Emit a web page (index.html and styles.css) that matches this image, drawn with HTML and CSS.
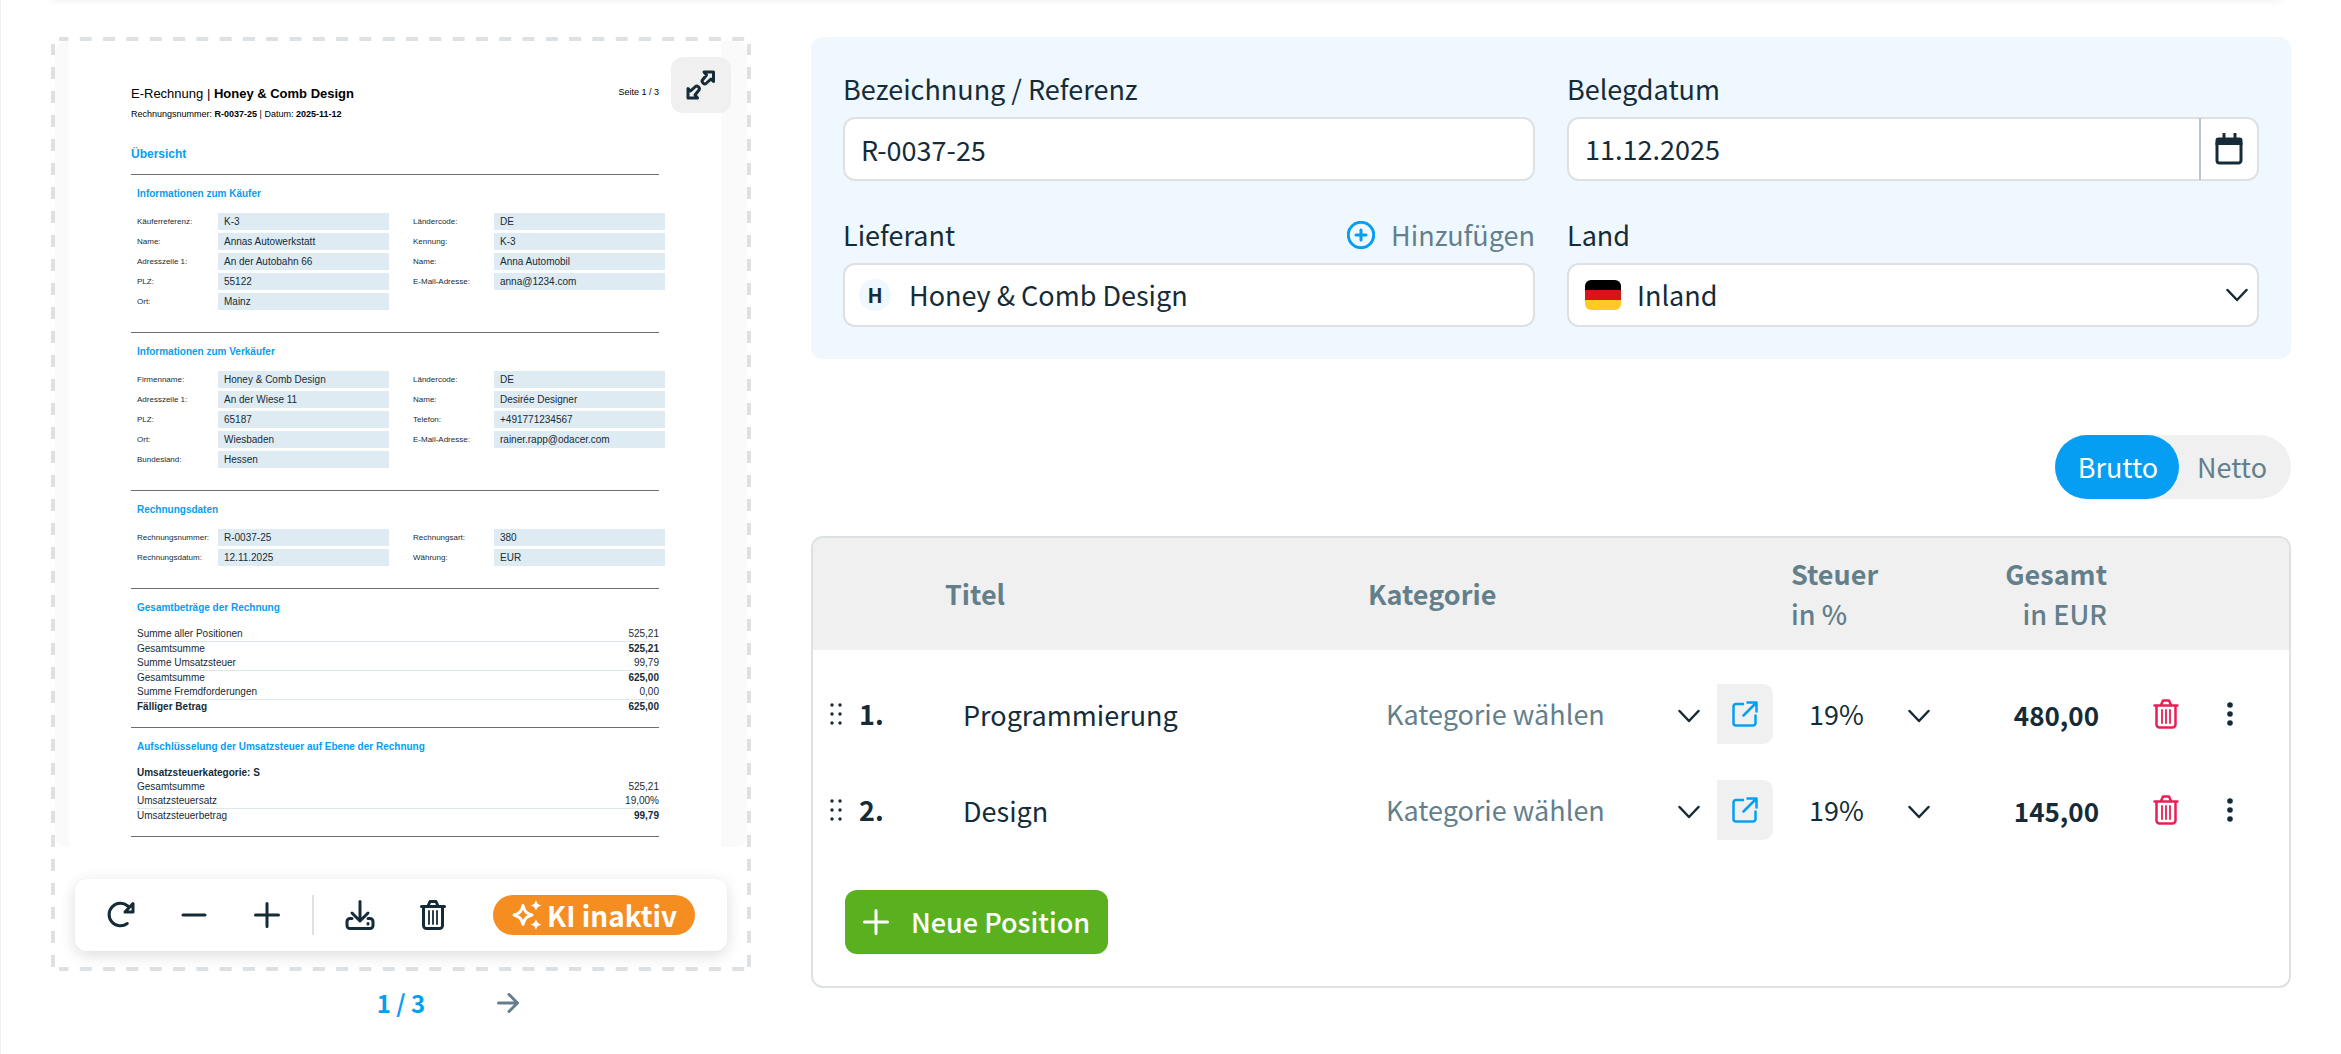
FILE: index.html
```html
<!DOCTYPE html>
<html lang="de">
<head>
  <meta charset="UTF-8">
  <meta name="viewport" content="width=device-width, initial-scale=1.0">
  <title>Beleg erfassen</title>
  <link rel="stylesheet" href="styles.css">
</head>
<body>

  <!-- Icons -->
  <svg class="sprite" aria-hidden="true">
    <symbol id="icon-trash" viewBox="0 0 26 30">
      <path d="M1.500 6.500h23M8 6l2-4.500h6L18 6M3.500 6.500v19a3 3 0 0 0 3 3h13a3 3 0 0 0 3-3v-19"/>
      <path stroke-width="1.800" d="M9 11v13M13 11v13M17 11v13"/>
    </symbol>
    <symbol id="icon-chevron" viewBox="0 0 22 14">
      <path d="M1.500 2 11 12l9.500-10"/>
    </symbol>
    <symbol id="icon-plus" viewBox="0 0 26 26">
      <path d="M13 1.500v23M1.500 13h23"/>
    </symbol>
    <symbol id="icon-external" viewBox="0 0 26 26">
      <path d="M11 3H4a2.500 2.500 0 0 0-2.500 2.500V22A2.500 2.500 0 0 0 4 24.500h17a2.500 2.500 0 0 0 2.500-2.500v-7.500M15.500 1.500h9v9M24 2 11.500 14.500"/>
    </symbol>
    <symbol id="icon-grip" viewBox="0 0 14 24">
      <circle cx="3" cy="3" r="1.700"/><circle cx="11" cy="3" r="1.700"/>
      <circle cx="3" cy="12" r="1.700"/><circle cx="11" cy="12" r="1.700"/>
      <circle cx="3" cy="21" r="1.700"/><circle cx="11" cy="21" r="1.700"/>
    </symbol>
    <symbol id="icon-dots" viewBox="0 0 8 24">
      <circle cx="4" cy="3" r="2.800"/><circle cx="4" cy="12" r="2.800"/><circle cx="4" cy="21" r="2.800"/>
    </symbol>
  </svg>

  <main class="page">

    <!-- Vorschau -->
    <section class="preview">
      <div class="viewer">
        <svg class="viewer-border" aria-hidden="true">
          <line x1="8" y1="2" x2="100%" y2="2" stroke-dasharray="12 11.3" stroke-dashoffset="2.500"/>
          <line x1="8" y1="100%" x2="100%" y2="100%" stroke-dasharray="12 11.3" stroke-dashoffset="2.500" class="edge-bottom"/>
          <line x1="2" y1="7" x2="2" y2="100%" stroke-dasharray="12 12" stroke-dashoffset="1"/>
          <line x1="100%" y1="7" x2="100%" y2="100%" stroke-dasharray="12 12" stroke-dashoffset="1" class="edge-right"/>
        </svg>

        <div class="canvas">
          <article class="paper">
            <header class="paper-head">
              <div>
                <p class="paper-title">E-Rechnung | <b>Honey &amp; Comb Design</b></p>
                <p class="paper-sub">Rechnungsnummer: <b>R-0037-25</b> | Datum: <b>2025-11-12</b></p>
              </div>
              <p class="paper-page">Seite 1 / 3</p>
            </header>
            <h1>Übersicht</h1>

            <section class="block">
              <h2>Informationen zum Käufer</h2>
              <div class="fields">
                <dl>
                  <dt>Käuferreferenz:</dt><dd>K-3</dd>
                  <dt>Name:</dt><dd>Annas Autowerkstatt</dd>
                  <dt>Adresszeile 1:</dt><dd>An der Autobahn 66</dd>
                  <dt>PLZ:</dt><dd>55122</dd>
                  <dt>Ort:</dt><dd>Mainz</dd>
                </dl>
                <dl>
                  <dt>Ländercode:</dt><dd>DE</dd>
                  <dt>Kennung:</dt><dd>K-3</dd>
                  <dt>Name:</dt><dd>Anna Automobil</dd>
                  <dt>E-Mail-Adresse:</dt><dd>anna@1234.com</dd>
                </dl>
              </div>
            </section>

            <section class="block">
              <h2>Informationen zum Verkäufer</h2>
              <div class="fields">
                <dl>
                  <dt>Firmenname:</dt><dd>Honey &amp; Comb Design</dd>
                  <dt>Adresszeile 1:</dt><dd>An der Wiese 11</dd>
                  <dt>PLZ:</dt><dd>65187</dd>
                  <dt>Ort:</dt><dd>Wiesbaden</dd>
                  <dt>Bundesland:</dt><dd>Hessen</dd>
                </dl>
                <dl>
                  <dt>Ländercode:</dt><dd>DE</dd>
                  <dt>Name:</dt><dd>Desirée Designer</dd>
                  <dt>Telefon:</dt><dd>+491771234567</dd>
                  <dt>E-Mail-Adresse:</dt><dd>rainer.rapp@odacer.com</dd>
                </dl>
              </div>
            </section>

            <section class="block">
              <h2>Rechnungsdaten</h2>
              <div class="fields">
                <dl>
                  <dt>Rechnungsnummer:</dt><dd>R-0037-25</dd>
                  <dt>Rechnungsdatum:</dt><dd>12.11.2025</dd>
                </dl>
                <dl>
                  <dt>Rechnungsart:</dt><dd>380</dd>
                  <dt>Währung:</dt><dd>EUR</dd>
                </dl>
              </div>
            </section>

            <section class="block block-sums">
              <h2>Gesamtbeträge der Rechnung</h2>
              <table class="sums">
                <tr class="ruled"><td>Summe aller Positionen</td><td>525,21</td></tr>
                <tr><td>Gesamtsumme</td><td><b>525,21</b></td></tr>
                <tr class="ruled"><td>Summe Umsatzsteuer</td><td>99,79</td></tr>
                <tr><td>Gesamtsumme</td><td><b>625,00</b></td></tr>
                <tr class="ruled"><td>Summe Fremdforderungen</td><td>0,00</td></tr>
                <tr><td><b>Fälliger Betrag</b></td><td><b>625,00</b></td></tr>
              </table>
            </section>

            <section class="block block-sums block-last">
              <h2>Aufschlüsselung der Umsatzsteuer auf Ebene der Rechnung</h2>
              <table class="sums">
                <tr><td><b>Umsatzsteuerkategorie: S</b></td><td></td></tr>
                <tr><td>Gesamtsumme</td><td>525,21</td></tr>
                <tr class="ruled"><td>Umsatzsteuersatz</td><td>19,00%</td></tr>
                <tr><td>Umsatzsteuerbetrag</td><td><b>99,79</b></td></tr>
              </table>
            </section>
          </article>
        </div>

        <button class="expand-btn" type="button" aria-label="Vergrößern">
          <svg width="30" height="30" viewBox="0 0 30 30">
            <path d="M18 2h9.500v9.500L25 9l-5 4.500c-1.500 1.500-5-1.500-3.500-3.500L20.500 5zM11.500 28H2v-9.500L4.500 21l5-4.500c1.500-1.500 5 1.500 3.500 3.500L9 25z"/>
          </svg>
        </button>

        <div class="toolbar">
          <button type="button" class="tool" aria-label="Drehen">
            <svg width="28" height="28" viewBox="0 0 28 28">
              <path d="M20.300 22.500A11.300 11.300 0 1 1 20.800 5M26 2.500V11h-8z"/>
            </svg>
          </button>
          <button type="button" class="tool" aria-label="Verkleinern">
            <svg width="26" height="26" viewBox="0 0 26 26"><path d="M2 13h22"/></svg>
          </button>
          <button type="button" class="tool" aria-label="Vergrößern">
            <svg width="26" height="26"><use href="#icon-plus"/></svg>
          </button>
          <span class="divider"></span>
          <button type="button" class="tool" aria-label="Herunterladen">
            <svg width="30" height="30" viewBox="0 0 30 30">
              <path d="M15 1.500v19M7 13l8 8 8-8M7 18.500H5a3 3 0 0 0-3 3v4a3 3 0 0 0 3 3h20a3 3 0 0 0 3-3v-4a3 3 0 0 0-3-3h-2M23 23.500v.500"/>
            </svg>
          </button>
          <button type="button" class="tool" aria-label="Löschen">
            <svg width="26" height="30"><use href="#icon-trash"/></svg>
          </button>
          <button type="button" class="ki-btn">
            <svg width="32" height="32" viewBox="0 0 32 32">
              <path d="M12 6.500c1.500 6 3.500 8 9 9.500-5.500 1.500-7.500 3.500-9 9.500-1.500-6-3.500-8-9-9.500 5.500-1.500 7.500-3.500 9-9.500z"/>
              <path class="solid" d="M25 1c1 3.500 2 4.500 5.500 5.500C27 7.500 26 8.500 25 12c-1-3.500-2-4.500-5.500-5.500C23 5.500 24 4.500 25 1zM25 20c1 3.500 2 4.500 5.500 5.500C27 26.500 26 27.500 25 31c-1-3.500-2-4.500-5.500-5.500C23 24.500 24 23.500 25 20z"/>
            </svg>
            KI inaktiv
          </button>
        </div>
      </div>

      <nav class="pager">
        <span class="pager-count">1 / 3</span>
        <button type="button" class="pager-next" aria-label="Nächste Seite">
          <svg width="22" height="20" viewBox="0 0 22 20"><path d="M1.500 10h19M12 1.500l8.500 8.500-8.500 8.500"/></svg>
        </button>
      </nav>
    </section>

    <!-- Beleg -->
    <form class="beleg">
      <div class="details">
        <div class="field">
          <div class="label-row"><label for="referenz">Bezeichnung / Referenz</label></div>
          <input class="control" type="text" id="referenz" value="R-0037-25">
        </div>

        <div class="field">
          <div class="label-row"><label for="datum">Belegdatum</label></div>
          <div class="control date">
            <input type="text" id="datum" value="11.12.2025">
            <button type="button" aria-label="Kalender öffnen">
              <svg width="28" height="32" viewBox="0 0 28 32">
                <path class="solid" d="M3.500 4.500h21a3 3 0 0 1 3 3V12H.500V7.500a3 3 0 0 1 3-3z"/>
                <path d="M9 1v6M20 1v6M2 10v17.500A2.500 2.500 0 0 0 4.500 30h19a2.500 2.500 0 0 0 2.500-2.500V10"/>
              </svg>
            </button>
          </div>
        </div>

        <div class="field">
          <div class="label-row">
            <label for="lieferant">Lieferant</label>
            <button type="button" class="add-btn">
              <svg width="28" height="28" viewBox="0 0 28 28">
                <circle cx="14" cy="14" r="12.700"/><path d="M14 9v10M9 14h10"/>
              </svg>
              Hinzufügen
            </button>
          </div>
          <div class="control supplier">
            <span class="avatar">H</span>
            <input type="text" id="lieferant" value="Honey &amp; Comb Design">
          </div>
        </div>

        <div class="field">
          <div class="label-row"><label for="land">Land</label></div>
          <div class="control country">
            <svg class="flag" width="36" height="30" viewBox="0 0 36 30" aria-hidden="true">
              <path fill="#000" d="M0 0h36v10H0z"/><path fill="#da1319" d="M0 10h36v10H0z"/><path fill="#ffca28" d="M0 20h36v10H0z"/>
            </svg>
            <select id="land"><option>Inland</option></select>
            <svg class="chevron" width="22" height="14"><use href="#icon-chevron"/></svg>
          </div>
        </div>
      </div>

      <div class="mode">
        <button type="button" class="mode-btn active">Brutto</button>
        <button type="button" class="mode-btn">Netto</button>
      </div>

      <div class="positions">
        <table class="pos-table">
          <colgroup>
            <col class="col-nr"><col><col><col class="col-tax"><col class="col-sum"><col class="col-actions">
          </colgroup>
          <thead>
            <tr>
              <th></th>
              <th>Titel</th>
              <th>Kategorie</th>
              <th>Steuer<br><small>in %</small></th>
              <th class="right">Gesamt<br><small>in EUR</small></th>
              <th></th>
            </tr>
          </thead>
          <tbody>
            <tr>
              <td>
                <div class="nr"><svg class="dots" width="14" height="24"><use href="#icon-grip"/></svg>1.</div>
              </td>
              <td><input class="cell-input" type="text" value="Programmierung" aria-label="Titel"></td>
              <td>
                <div class="category">
                  <div class="pick">
                    <select class="empty" aria-label="Kategorie"><option>Kategorie wählen</option></select>
                    <svg class="chevron" width="22" height="14"><use href="#icon-chevron"/></svg>
                  </div>
                  <button type="button" class="open-btn" aria-label="Kategorien öffnen"><svg width="26" height="26"><use href="#icon-external"/></svg></button>
                </div>
              </td>
              <td>
                <div class="pick">
                  <select aria-label="Steuer"><option>19%</option></select>
                  <svg class="chevron" width="22" height="14"><use href="#icon-chevron"/></svg>
                </div>
              </td>
              <td><input class="cell-input amount" type="text" value="480,00" aria-label="Gesamt"></td>
              <td>
                <div class="actions">
                  <button type="button" class="delete" aria-label="Löschen"><svg width="26" height="30"><use href="#icon-trash"/></svg></button>
                  <button type="button" aria-label="Mehr"><svg class="dots" width="8" height="24"><use href="#icon-dots"/></svg></button>
                </div>
              </td>
            </tr>
            <tr>
              <td>
                <div class="nr"><svg class="dots" width="14" height="24"><use href="#icon-grip"/></svg>2.</div>
              </td>
              <td><input class="cell-input" type="text" value="Design" aria-label="Titel"></td>
              <td>
                <div class="category">
                  <div class="pick">
                    <select class="empty" aria-label="Kategorie"><option>Kategorie wählen</option></select>
                    <svg class="chevron" width="22" height="14"><use href="#icon-chevron"/></svg>
                  </div>
                  <button type="button" class="open-btn" aria-label="Kategorien öffnen"><svg width="26" height="26"><use href="#icon-external"/></svg></button>
                </div>
              </td>
              <td>
                <div class="pick">
                  <select aria-label="Steuer"><option>19%</option></select>
                  <svg class="chevron" width="22" height="14"><use href="#icon-chevron"/></svg>
                </div>
              </td>
              <td><input class="cell-input amount" type="text" value="145,00" aria-label="Gesamt"></td>
              <td>
                <div class="actions">
                  <button type="button" class="delete" aria-label="Löschen"><svg width="26" height="30"><use href="#icon-trash"/></svg></button>
                  <button type="button" aria-label="Mehr"><svg class="dots" width="8" height="24"><use href="#icon-dots"/></svg></button>
                </div>
              </td>
            </tr>
          </tbody>
        </table>
        <button type="button" class="new-btn">
          <svg width="26" height="26"><use href="#icon-plus"/></svg>
          Neue Position
        </button>
      </div>
    </form>

  </main>

</body>
</html>
```
FILE: styles.css
```css
* {
  box-sizing: border-box;
}

body {
  margin: 0;
  min-height: 100vh;
  background-color: #fff;
  border-left: 1px solid #f0f0f0;
  color: #152c38;
  font-family: "Noto Sans CJK SC", "Noto Sans", sans-serif;
  font-size: 27px;
  line-height: 40px;
}

button, input, select {
  margin: 0;
  padding: 0;
  border: none;
  background: none;
  color: inherit;
  font: inherit;
}

button {
  display: flex;
  align-items: center;
  justify-content: center;
  cursor: pointer;
}

input, select {
  min-width: 0;
  width: 100%;
  outline: none;
}

select {
  appearance: none;
}

svg {
  flex: none;
  fill: none;
  stroke: currentColor;
  stroke-width: 3;
  stroke-linecap: round;
  stroke-linejoin: round;
}

.sprite {
  display: none;
}

.page {
  display: grid;
  grid-template-columns: 35fr 74fr;
  gap: 60px;
  align-items: start;
  padding: 37px 50px 20px;
}

.page::before {
  content: "";
  position: absolute;
  top: -10px;
  left: 50px;
  right: 60px;
  height: 10px;
  box-shadow: 0 0 8px rgba(0, 0, 0, 0.08);
}

/* Vorschau */
.viewer {
  position: relative;
  padding: 4px 4px 20px;
}

.viewer-border {
  position: absolute;
  top: 0;
  left: 0;
  width: 100%;
  height: 100%;
  stroke: #dde1e4;
  stroke-width: 4;
  stroke-linecap: butt;
}

.edge-bottom {
  transform: translateY(-2px);
}

.edge-right {
  transform: translateX(-2px);
}

.canvas {
  padding: 0 26px 0 14px;
  background-color: #fafafa;
  border-radius: 12px;
}

.paper {
  padding: 43px 62px 10px;
  background-color: #fff;
  color: #152c38;
  font-family: "Liberation Sans", Arial, sans-serif;
  font-size: 10px;
  line-height: 14px;
}

.paper p,
.paper h1,
.paper h2,
.paper dl,
.paper dd {
  margin: 0;
}

.paper-head {
  display: flex;
  justify-content: space-between;
  color: #000;
}

.paper-title {
  font-size: 13px;
  line-height: 20px;
}

.paper-sub {
  font-size: 9px;
  line-height: 20px;
}

.paper-page {
  font-size: 9px;
  line-height: 17px;
}

.paper h1 {
  padding: 20px 0 10px;
  color: #069ef2;
  font-size: 12px;
  line-height: 20px;
}

.block {
  padding: 10px 0 22px 6px;
  border-top: 1px solid #6e6e6e;
}

.block-sums {
  padding-bottom: 13px;
}

.block-last {
  border-bottom: 1px solid #6e6e6e;
}

.block h2 {
  padding-bottom: 10px;
  color: #069ef2;
  font-size: 10px;
  line-height: 18px;
}

.fields {
  display: grid;
  grid-template-columns: 1fr 1fr;
  gap: 24px;
  align-items: start;
  margin-right: -6px;
}

.fields dl {
  display: grid;
  grid-template-columns: 81px 1fr;
  row-gap: 3px;
}

.fields dt {
  font-size: 8px;
  line-height: 17px;
}

.fields dd {
  padding-left: 6px;
  background-color: #dfebf3;
  line-height: 17px;
}

.sums {
  width: 100%;
  border-collapse: collapse;
}

.sums td {
  height: 14px;
  padding: 0;
}

.sums td:last-child {
  text-align: right;
}

.sums .ruled {
  border-bottom: 1px solid #dfe8e8;
}

.expand-btn {
  position: absolute;
  top: 20px;
  right: 20px;
  width: 60px;
  height: 56px;
  background-color: #f0f0f0;
  border-radius: 12px;
}

.toolbar {
  display: flex;
  align-items: center;
  height: 72px;
  margin: 32px 20px 0;
  padding-left: 9px;
  background-color: #fff;
  border-radius: 12px;
  box-shadow: 0 4px 16px rgba(0, 0, 0, 0.14);
  position: relative;
}

.tool {
  width: 73px;
  height: 60px;
}

.divider {
  width: 2px;
  height: 40px;
  margin: 0 9px;
  background-color: #dde1e4;
}

.ki-btn {
  height: 40px;
  margin-left: 24px;
  padding: 0 18px;
  gap: 4px;
  background-color: #f58d20;
  border-radius: 20px;
  color: #fff;
  font-size: 28px;
  font-weight: bold;
  white-space: nowrap;
}

.ki-btn .solid {
  fill: currentColor;
  stroke: none;
}

.pager {
  display: grid;
  grid-template-columns: 1fr auto 1fr;
  align-items: center;
  gap: 72px;
  margin-top: 12px;
}

.pager-count {
  grid-column: 2;
  color: #069ef2;
  font-size: 24px;
  font-weight: bold;
}

.pager-next {
  justify-self: start;
  color: #637f8b;
}

/* Belegdaten */
.details {
  display: grid;
  grid-template-columns: 1fr 1fr;
  gap: 34px 32px;
  padding: 32px;
  background-color: #eff7ff;
  border-radius: 12px;
}

.label-row {
  display: flex;
  align-items: center;
  justify-content: space-between;
  height: 40px;
  margin-bottom: 8px;
}

.add-btn {
  gap: 16px;
  color: #637f8b;
}

.add-btn svg {
  color: #069ef2;
}

.control {
  display: flex;
  align-items: center;
  height: 64px;
  padding: 0 16px;
  background-color: #fff;
  border: 2px solid #dde1e4;
  border-radius: 12px;
}

.date {
  padding-right: 0;
}

.date button {
  flex: none;
  width: 58px;
  height: 62px;
  border-left: 2px solid #b9c5ca;
}

.date .solid {
  fill: currentColor;
  stroke: none;
}

.supplier {
  gap: 18px;
  padding-left: 14px;
}

.avatar {
  flex: none;
  width: 32px;
  height: 32px;
  background-color: #eff7ff;
  border-radius: 50%;
  font-size: 20px;
  font-weight: bold;
  line-height: 32px;
  text-align: center;
}

.country {
  gap: 16px;
  padding-right: 9px;
}

.flag {
  border-radius: 6px;
  stroke: none;
}

/* Brutto / Netto */
.mode {
  display: flex;
  width: fit-content;
  height: 64px;
  margin: 76px 0 37px auto;
  background-color: #f0f0f0;
  border-radius: 32px;
  color: #637f8b;
}

.mode-btn {
  padding: 0 24px 0 18px;
}

.mode-btn.active {
  padding: 0 21px 0 23px;
  background-color: #069ef2;
  border-radius: 32px;
  color: #fff;
}

/* Positionen */
.positions {
  overflow: hidden;
  padding-bottom: 32px;
  border: 2px solid #dde1e4;
  border-radius: 12px;
}

.pos-table {
  width: 100%;
  border-collapse: collapse;
  table-layout: fixed;
}

.col-nr {
  width: 132px;
}

.col-tax {
  width: 139px;
}

.col-sum {
  width: 177px;
}

.col-actions {
  width: 182px;
}

.pos-table th {
  height: 112px;
  padding: 0;
  background-color: #f0f0f0;
  color: #637f8b;
  text-align: left;
}

.pos-table th.right {
  text-align: right;
}

.pos-table small {
  font-size: 27px;
  font-weight: 500;
}

.pos-table td {
  height: 96px;
  padding: 0;
}

.pos-table tbody tr:first-child td {
  height: 112px;
  padding-top: 16px;
}

.chevron,
.open-btn svg,
.delete svg {
  stroke-width: 2.5;
}

.dots {
  fill: currentColor;
  stroke: none;
}

.nr {
  display: flex;
  align-items: center;
  gap: 16px;
  padding-left: 16px;
  font-weight: bold;
}

.cell-input {
  height: 60px;
  padding: 0 18px;
}

.cell-input.amount {
  padding-right: 8px;
  font-size: 26px;
  font-weight: bold;
  text-align: right;
}

.category {
  display: flex;
  gap: 17px;
  padding-right: 18px;
}

.pick {
  position: relative;
  flex: 1;
}

.pick select {
  height: 60px;
  padding: 0 40px 0 18px;
}

.pick select.empty {
  color: #637f8b;
}

.pick .chevron {
  position: absolute;
  top: 25px;
  right: 0;
  pointer-events: none;
}

.category .open-btn {
  width: 56px;
  height: 60px;
  background-color: #f0f0f0;
  border-radius: 0 10px 10px 0;
  color: #069ef2;
}

.actions {
  display: flex;
  align-items: center;
  gap: 47px;
  padding-left: 46px;
}

.actions button {
  height: 60px;
}

.delete {
  color: #e91e55;
}

.new-btn {
  height: 64px;
  margin: 32px 0 0 32px;
  padding: 0 18px;
  gap: 22px;
  background-color: #59b120;
  border-radius: 12px;
  color: #fff;
  font-weight: 500;
}
```
